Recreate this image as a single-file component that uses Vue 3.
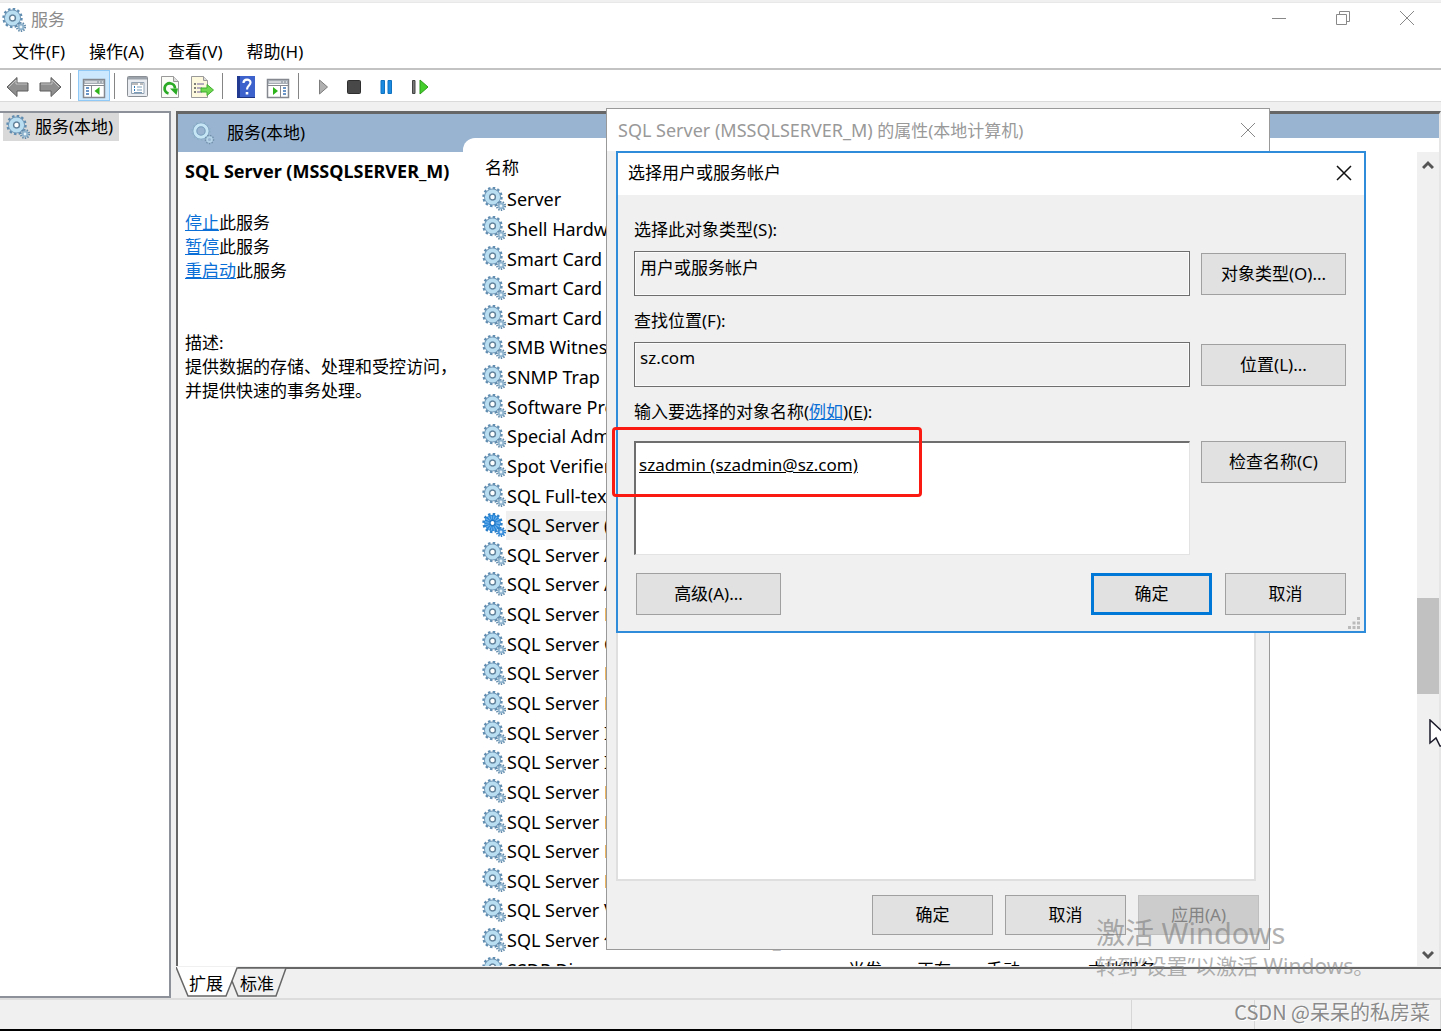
<script setup>
import { ref } from 'vue'

const menus = ['文件(F)', '操作(A)', '查看(V)', '帮助(H)']

const services = [
  'Server',
  'Shell Hardware',
  'Smart Card',
  'Smart Card',
  'Smart Card',
  'SMB Witness',
  'SNMP Trap',
  'Software Prot',
  'Special Admin',
  'Spot Verifier',
  'SQL Full-text',
  'SQL Server (M',
  'SQL Server A',
  'SQL Server A',
  'SQL Server B',
  'SQL Server C',
  'SQL Server D',
  'SQL Server D',
  'SQL Server I',
  'SQL Server I',
  'SQL Server L',
  'SQL Server P',
  'SQL Server R',
  'SQL Server R',
  'SQL Server V',
  'SQL Server 代理 (MSSQLSERVER_M)',
]
const selected = 11

const objectType = ref('用户或服务帐户')
const location = ref('sz.com')
const names = ref('szadmin (szadmin@sz.com)')
</script>

<template>
  <div class="desktop">
    <svg class="defs" width="0" height="0" aria-hidden="true">
      <defs>
        <g id="gear-shape">
          <circle cx="10.500" cy="10" r="8.8" fill="none" stroke="#5f8cb0" stroke-width="2.8" stroke-dasharray="2.4 2.2" />
          <circle cx="10.500" cy="10" r="5.9" fill="none" stroke="#7299b8" stroke-width="5.2" />
          <circle cx="10.500" cy="10" r="5.6" fill="none" stroke="#b9ddf1" stroke-width="4" />
          <circle cx="10.500" cy="10" r="2.900" fill="#fff" stroke="#5f8099" stroke-width="1.4" />
          <circle cx="19" cy="19" r="4" fill="none" stroke="#5f88a8" stroke-width="2.2" stroke-dasharray="1.3 1.2" />
          <circle cx="19" cy="19" r="2.4" fill="#e8f3fa" stroke="#8fb3cd" stroke-width="2" />
        </g>
        <g id="gear-picked">
          <circle cx="10.500" cy="10" r="8.8" fill="none" stroke="#2b7fc8" stroke-width="2.8" stroke-dasharray="2.4 2.2" />
          <circle cx="10.500" cy="10" r="5.6" fill="none" stroke="#2585d8" stroke-width="5.4" />
          <circle cx="10.500" cy="10" r="5.6" fill="none" stroke="#6db0ea" stroke-width="4" stroke-dasharray="1 1.2" />
          <circle cx="10.500" cy="10" r="2.6" fill="#fff" stroke="#1c74c4" stroke-width="1.4" />
          <circle cx="19" cy="19" r="4" fill="none" stroke="#2b7fc8" stroke-width="2.2" stroke-dasharray="1.3 1.2" />
          <circle cx="19" cy="19" r="2.4" fill="#d5e9fa" stroke="#3c8fdb" stroke-width="2" />
        </g>
        <g id="gear-pale">
          <circle cx="10" cy="10" r="8.8" fill="none" stroke="#8fb0c8" stroke-width="2" stroke-dasharray="1.6 2.4" />
          <circle cx="10" cy="10" r="6" fill="none" stroke="#7399b8" stroke-width="4.6" />
          <circle cx="10" cy="10" r="6.2" fill="none" stroke="#c6e6f6" stroke-width="3" />
          <circle cx="18.5" cy="18.5" r="4" fill="none" stroke="#6f8fa8" stroke-width="1.6" stroke-dasharray="1.3 1.4" />
          <circle cx="18.5" cy="18.5" r="2.4" fill="none" stroke="#b5d3e6" stroke-width="1.6" />
        </g>
      </defs>
    </svg>

    <header class="titlebar">
      <svg class="gear" viewBox="0 0 24 24"><use href="#gear-shape" /></svg>
      <span class="app-title">服务</span>
      <div class="win-buttons">
        <button type="button" aria-label="最小化">
          <svg width="16" height="16" viewBox="0 0 16 16"><path d="M1 8.5h14" stroke="#888" fill="none" /></svg>
        </button>
        <button type="button" aria-label="还原">
          <svg width="16" height="16" viewBox="0 0 16 16"><path d="M1.5 4.500h10v10h-10zM4.500 4.500v-3h10v10h-3" stroke="#888" fill="none" /></svg>
        </button>
        <button type="button" aria-label="关闭">
          <svg width="16" height="16" viewBox="0 0 16 16"><path d="M1 1l14 14M15 1L1 15" stroke="#888" fill="none" /></svg>
        </button>
      </div>
    </header>

    <nav class="menubar">
      <button v-for="m in menus" :key="m" type="button">{{ m }}</button>
    </nav>

    <div class="toolbar">
      <button type="button" aria-label="后退">
        <svg width="24" height="24" viewBox="0 0 24 24"><path d="M1 12L11 2.500v5.500h11v8h-11v5.500z" fill="#8f8f8f" stroke="#5c5c5c" /><path d="M3 12l7-7v4h11" fill="none" stroke="#c4c4c4" /></svg>
      </button>
      <button type="button" aria-label="前进">
        <svg width="24" height="24" viewBox="0 0 24 24"><path d="M23 12L13 2.500v5.500h-11v8h11v5.500z" fill="#8f8f8f" stroke="#5c5c5c" /><path d="M3 9h11V5l7 7" fill="none" stroke="#c4c4c4" /></svg>
      </button>
      <i class="sep"></i>
      <button type="button" class="on" aria-label="显示控制台树">
        <svg width="24" height="24" viewBox="0 0 24 24"><path d="M1.500 4.500h21v18h-21z" fill="#fff" stroke="#85898f" stroke-width="1.500" /><path d="M2 5h20v4H2z" fill="#a6adb5" /><path d="M3 7h12M17 7h1M20 7h1" stroke="#fff" /><path d="M2 10.500h20M9.500 10v12" stroke="#85898f" /><path d="M4 13h3M4 16h3M4 19h3" stroke="#3d73b5" stroke-width="1.500" /><path d="M17.500 12v8l-5-4z" fill="#2fb31c" /></svg>
      </button>
      <i class="sep"></i>
      <button type="button" aria-label="属性">
        <svg width="24" height="24" viewBox="0 0 24 24"><rect x="1.500" y="1.500" width="20" height="20" rx="1" fill="#e9edf1" stroke="#8a8f95" /><path d="M2 2h19v2.500H2z" fill="#9ca3aa" /><path d="M5.500 7.500h12.500v11h-12.500z" fill="#fff" stroke="#93a4b5" /><path d="M6 9h6M14 9h3" stroke="#777" /><path d="M8 12h1M8 15h1" stroke="#2b78bb" stroke-width="2" /><path d="M11 12h5M11 15h5M8 17.500h8" stroke="#7a9cba" /></svg>
      </button>
      <button type="button" aria-label="刷新">
        <svg width="24" height="24" viewBox="0 0 24 24"><path d="M3.500 1.500h12l5 5v16h-17z" fill="#fbfbf8" stroke="#999" /><path d="M15.500 1.500v5h5" fill="#ddd" stroke="#999" /><path d="M10.500 18.500a5.200 5.200 0 1 1 6.500-5" fill="none" stroke="#2bab25" stroke-width="2.800" /><path d="M12 13.500h8l-1.500 6.500z" fill="#2bab25" /></svg>
      </button>
      <button type="button" aria-label="导出列表">
        <svg width="24" height="24" viewBox="0 0 24 24"><path d="M1.500 1.500h12l4 4v17h-16z" fill="#fdf9df" stroke="#999" /><path d="M13.500 1.500v4h4" fill="#ddd" stroke="#999" /><path d="M4 9h2M4 13h2M4 17h2" stroke="#555" stroke-width="1.500" /><path d="M7 9h7M7 13h5M7 17h5" stroke="#6b5f99" /><path d="M11 13h6V9.500l6.500 5.500L17 20.500V17h-6z" fill="#6fd850" stroke="#3fae2f" /></svg>
      </button>
      <i class="sep"></i>
      <button type="button" aria-label="帮助">
        <svg width="24" height="24" viewBox="0 0 24 24"><path d="M3 1h18v22H3z" fill="#3d62cc" /><path d="M3 1h3v22H3z" fill="#223a91" /><path d="M3 22.500h18" stroke="#1d3480" /><path d="M9.500 8c0-4.500 7-4.500 7-.5 0 3-3.500 3-3.500 7" fill="none" stroke="#fff" stroke-width="2.200" /><path d="M11.700 17h2.600v2.500h-2.600z" fill="#fff" /></svg>
      </button>
      <button type="button" aria-label="显示操作窗格">
        <svg width="24" height="24" viewBox="0 0 24 24"><path d="M1.500 4.500h21v18h-21z" fill="#fff" stroke="#85898f" stroke-width="1.500" /><path d="M2 5h20v4H2z" fill="#a6adb5" /><path d="M3 7h12M17 7h1M20 7h1" stroke="#fff" /><path d="M2 10.500h20M14.500 10v12" stroke="#85898f" /><path d="M17 13h3M17 16h3M17 19h3" stroke="#3d73b5" stroke-width="1.500" /><path d="M7 12v8l5-4z" fill="#2fb31c" /></svg>
      </button>
      <i class="sep"></i>
      <button type="button" aria-label="启动服务">
        <svg width="24" height="24" viewBox="0 0 24 24"><path d="M9.500 5v14l8-7z" fill="#b0b0b0" stroke="#7c7c7c" /></svg>
      </button>
      <button type="button" aria-label="停止服务">
        <svg width="24" height="24" viewBox="0 0 24 24"><rect x="5.500" y="5.500" width="13" height="13" rx="1" fill="#484848" stroke="#2e2e2e" /></svg>
      </button>
      <button type="button" aria-label="暂停服务">
        <svg width="24" height="24" viewBox="0 0 24 24"><path d="M7 5.500h3.500v13H7zM14 5.500h3.500v13H14z" fill="#1a8ae0" stroke="#1173c0" /></svg>
      </button>
      <button type="button" aria-label="重启动服务">
        <svg width="24" height="24" viewBox="0 0 24 24"><path d="M6.500 5.500h2.500v13H6.500z" fill="#777" stroke="#444" /><path d="M14 5v14l8-7z" fill="#45cf2c" stroke="#2b9c18" /></svg>
      </button>
    </div>

    <main class="workspace">
      <aside class="tree">
        <button type="button" class="tree-item">
          <svg class="gear" viewBox="0 0 24 24"><use href="#gear-shape" /></svg>
          <span>服务(本地)</span>
        </button>
      </aside>

      <section class="result">
        <div class="pane">
          <div class="pane-head">
            <svg class="gear" viewBox="0 0 24 24"><use href="#gear-pale" /></svg>
            <span>服务(本地)</span>
          </div>
          <div class="pane-body">
            <div class="details">
              <h2>SQL Server (MSSQLSERVER_M)</h2>
              <p><a href="#stop">停止</a>此服务</p>
              <p><a href="#pause">暂停</a>此服务</p>
              <p><a href="#restart">重启动</a>此服务</p>
              <p class="about">描述:</p>
              <p>提供数据的存储、处理和受控访问，<br />并提供快速的事务处理。</p>
            </div>
            <div class="list">
              <div class="list-head">名称</div>
              <ul>
                <li v-for="(s, i) in services" :key="i" :class="{ picked: i === selected }">
                  <svg class="gear" viewBox="0 0 24 24"><use :href="i === selected ? '#gear-picked' : '#gear-shape'" /></svg>
                  <span class="name">{{ s }}</span>
                </li>
                <li>
                  <svg class="gear" viewBox="0 0 24 24"><use href="#gear-shape" /></svg>
                  <span class="name cell-name">SSDP Di</span>
                  <span class="cell">当发</span>
                  <span class="cell">正在</span>
                  <span class="cell-start">手动</span>
                  <span>本地服务</span>
                </li>
              </ul>
            </div>
            <div class="scroll">
              <svg width="12" height="10" viewBox="0 0 12 10"><path d="M1 8l5-5 5 5" fill="none" stroke="#555" stroke-width="3" /></svg>
              <div class="thumb"></div>
              <svg width="12" height="10" viewBox="0 0 12 10"><path d="M1 2l5 5 5-5" fill="none" stroke="#555" stroke-width="3" /></svg>
            </div>
          </div>
        </div>
        <div class="tabs">
          <svg class="tab-lines" width="112" height="30" viewBox="0 0 112 30">
            <path d="M0 0l12 29h38l12-29z" fill="#fff" />
            <path d="M0 0l12 29h38l6-15" fill="none" stroke="#666" stroke-width="1.500" />
            <path d="M56 14l6 15h38L110 1H61z" fill="#f0f0f0" stroke="#666" stroke-width="1.500" />
          </svg>
          <button type="button">扩展</button>
          <button type="button">标准</button>
        </div>
      </section>
    </main>

    <footer class="status"><span></span><span></span><span></span></footer>

    <section class="dialog props">
      <div class="dlg-title">
        <span><span class="latin">SQL Server (MSSQLSERVER_M)</span> 的属性(本地计算机)</span>
        <button type="button" aria-label="关闭">
          <svg width="16" height="16" viewBox="0 0 16 16"><path d="M1 1l14 14M15 1L1 15" stroke="#888" fill="none" /></svg>
        </button>
      </div>
      <div class="props-page"></div>
      <div class="props-buttons">
        <button type="button" class="btn">确定</button>
        <button type="button" class="btn">取消</button>
        <button type="button" class="btn" disabled>应用(A)</button>
      </div>
    </section>

    <section class="dialog picker">
      <div class="dlg-title">
        <span>选择用户或服务帐户</span>
        <button type="button" aria-label="关闭">
          <svg width="16" height="16" viewBox="0 0 16 16"><path d="M1 1l14 14M15 1L1 15" stroke="#111" stroke-width="1.500" fill="none" /></svg>
        </button>
      </div>
      <div class="form">
        <label for="obj-type">选择此对象类型(S):</label>
        <div class="line">
          <input id="obj-type" v-model="objectType" readonly />
          <button type="button" class="btn">对象类型(O)...</button>
        </div>
        <label for="loc">查找位置(F):</label>
        <div class="line">
          <input id="loc" v-model="location" readonly />
          <button type="button" class="btn">位置(L)...</button>
        </div>
        <label for="names">输入要选择的对象名称(<a href="#examples">例如</a>)(<u>E</u>):</label>
        <div class="line names-line">
          <textarea id="names" v-model="names" spellcheck="false"></textarea>
          <button type="button" class="btn">检查名称(C)</button>
        </div>
        <div class="actions">
          <button type="button" class="btn advanced">高级(A)...</button>
          <button type="button" class="btn primary">确定</button>
          <button type="button" class="btn">取消</button>
        </div>
      </div>
      <svg class="grip" width="12" height="12" viewBox="0 0 12 12"><path d="M9 0h3v3H9zM9 4.500h3v3H9zM9 9h3v3H9zM4.500 4.500h3v3h-3zM4.500 9h3v3h-3zM0 9h3v3H0z" fill="#bbb" /></svg>
    </section>

    <div class="highlight"></div>

    <div class="activate">
      <div class="activate-title">激活 Windows</div>
      <div class="activate-text">转到“设置”以激活 Windows。</div>
    </div>
    <div class="credit">CSDN @呆呆的私房菜</div>

    <svg class="cursor" width="12" height="30" viewBox="0 0 12 30"><path d="M1 1v23l6-5 4 8h6V16z" fill="#fff" stroke="#1a1a2a" stroke-width="1.500" /></svg>
  </div>
</template>

<style>
body {
  margin: 0;
  background: #fff;
}
</style>

<style scoped>
.desktop {
  position: relative;
  display: flex;
  flex-direction: column;
  box-sizing: border-box;
  min-height: 100vh;
  margin-right: 4px;
  border-bottom: 2px solid #000;
  overflow: hidden;
  background: #f0f0f0;
  color: #000;
  font-family: "Noto Sans", "Noto Sans CJK SC", sans-serif;
  font-size: 17px;
  line-height: 24px;
}
.defs {
  position: absolute;
}
button {
  padding: 0;
  border: 0;
  background: none;
  color: inherit;
  font: inherit;
}
a {
  color: #0a6fd6;
}
svg {
  display: block;
  flex: none;
}
.gear {
  width: 24px;
  height: 24px;
}
.latin {
  font-size: 18px;
}

.titlebar {
  display: flex;
  align-items: center;
  gap: 5px;
  height: 34px;
  border-top: 1px solid #e8e8e8;
  margin-top: 2px;
  padding-left: 2px;
  background: #fff;
  color: #8c8c8c;
}
.win-buttons {
  display: flex;
  gap: 48px;
  margin-left: auto;
  padding: 0 26px 4px 0;
}
.menubar {
  display: flex;
  gap: 24px;
  box-sizing: border-box;
  height: 33px;
  padding: 0 0 2px 12px;
  border-bottom: 2px solid #c3c3c3;
  background: #fff;
}
.toolbar {
  display: flex;
  height: 31px;
  padding-left: 2px;
  border-bottom: 1px solid #dadada;
  background: #fff;
}
.toolbar button {
  display: flex;
  align-items: center;
  justify-content: center;
  box-sizing: border-box;
  width: 32px;
  height: 31px;
  padding-top: 2px;
}
.toolbar .on {
  border: 1px solid #90c8f6;
  background: #cce8ff;
}
.sep {
  box-sizing: border-box;
  width: 12px;
  height: 26px;
  margin-top: 3px;
  border: solid transparent;
  border-width: 0 7px 0 4px;
  background: #858585;
  background-clip: padding-box;
}

.workspace {
  display: flex;
  flex: 1;
  gap: 5px;
  margin-top: 9px;
}
.tree {
  box-sizing: border-box;
  width: 171px;
  padding: 0 0 0 3px;
  border: 2px solid #8d929a;
  border-left: 0;
  background: #fff;
}
.tree-item {
  display: flex;
  align-items: center;
  gap: 5px;
  height: 28px;
  padding: 0 6px 0 3px;
  background: #d9d9d9;
}
.result {
  display: flex;
  flex: 1;
  flex-direction: column;
  min-width: 0;
}
.pane {
  display: flex;
  flex: 1;
  flex-direction: column;
  border: solid #666;
  border-width: 3px 2px 0 2px;
  border-right-color: #e6e6e6;
  background: #fff;
}
.pane-head {
  display: flex;
  align-items: center;
  gap: 12px;
  height: 38px;
  padding-left: 13px;
  background: #99b4d1;
}
.pane-body {
  display: flex;
  flex: 1;
}
.details {
  box-sizing: border-box;
  width: 285px;
  padding: 7px 0 0 7px;
}
h2 {
  margin: 0 0 28px;
  font-size: 18px;
  line-height: 24px;
  white-space: nowrap;
}
p {
  margin: 0;
  white-space: nowrap;
}
.details .about {
  margin-top: 48px;
}
.list {
  flex: 1;
  min-width: 0;
  height: 828px;
  margin-top: -14px;
  padding-left: 19px;
  border-top-left-radius: 12px;
  overflow: hidden;
  background: #fff;
}
.list-head {
  padding: 18px 0 5px 3px;
}
ul {
  display: grid;
  grid-auto-rows: 1fr;
  height: 800px;
  margin: 0;
  padding: 0;
  list-style: none;
}
li {
  display: flex;
  align-items: center;
  white-space: nowrap;
}
li .gear {
  margin-bottom: 2px;
}
.name {
  padding: 2px 2px 2px 1px;
  font-size: 18px;
  line-height: 25px;
}
.picked .name {
  background: #f0f0f0;
}
.cell-name {
  width: 339px;
}
.cell {
  width: 69px;
}
.cell-start {
  width: 102px;
}
.scroll {
  display: flex;
  flex-direction: column;
  align-items: center;
  width: 22px;
  margin-top: -14px;
  padding: 8px 0 6px;
  border-top: 14px solid #fff;
  background: #f0f0f0;
}
.thumb {
  width: 22px;
  height: 96px;
  margin: 428px 0 auto;
  background: #c1c1c1;
}
.tabs {
  position: relative;
  display: flex;
  gap: 17px;
  height: 29px;
  margin-top: 1px;
  padding-left: 13px;
  border-top: 2px solid #666;
}
.tab-lines {
  position: absolute;
  top: -2px;
  left: 0;
}
.tabs button {
  position: relative;
}
.status {
  display: flex;
  justify-content: flex-end;
  height: 29px;
  border-top: 2px solid #dcdcdc;
}
.status span {
  box-sizing: border-box;
  width: 184px;
  border-right: 1px solid #d6d6d6;
}
.status span:nth-child(2) {
  width: 123px;
}
.status span:last-child {
  width: 186px;
}

.dialog {
  position: absolute;
  display: flex;
  flex-direction: column;
  box-sizing: border-box;
  background: #f0f0f0;
}
.dlg-title {
  display: flex;
  align-items: center;
  justify-content: space-between;
  box-sizing: border-box;
  height: 42px;
  padding: 0 12px 2px 10px;
  background: #fff;
}
.btn {
  box-sizing: border-box;
  width: 145px;
  height: 42px;
  border: 1px solid #a0a0a0;
  background: #e1e1e1;
}
.props {
  top: 108px;
  left: 606px;
  width: 664px;
  height: 842px;
  border: 1px solid #999;
  padding-bottom: 14px;
}
.props .dlg-title {
  padding: 0 13px 0 11px;
  color: #999;
}
.props-page {
  flex: 1;
  margin: 0 13px 14px 9px;
  border: 2px solid #dfdfdf;
  background: #fff;
}
.props-buttons {
  display: flex;
  justify-content: flex-end;
  gap: 12px;
  padding-right: 10px;
}
.props-buttons .btn {
  width: 121px;
  height: 40px;
}
.btn:disabled {
  border-color: #bfbfbf;
  background: #ccc;
  color: #838383;
}
.picker {
  top: 151px;
  left: 616px;
  width: 750px;
  border: 2px solid #2f8cdb;
}
.form {
  display: flex;
  flex-direction: column;
  padding: 23px 18px 16px 16px;
}
.line {
  display: flex;
  align-items: center;
  gap: 11px;
  margin: 9px 0 13px;
}
.line input {
  box-sizing: border-box;
  flex: 1;
  min-width: 0;
  height: 45px;
  padding: 0 5px 14px;
  border: 1px solid #6e6e6e;
  outline: 1px solid #fbfbfb;
  outline-offset: -2px;
  background: #f0f0f0;
  color: #000;
  font: inherit;
}
.names-line {
  align-items: flex-start;
  margin: 17px 0 18px;
}
textarea {
  box-sizing: border-box;
  flex: 1;
  min-width: 0;
  height: 114px;
  padding: 10px 3px;
  border: solid #6e6e6e;
  border-width: 2px 1px 1px 2px;
  border-right-color: #e3e3e3;
  border-bottom-color: #e3e3e3;
  outline: 0;
  resize: none;
  background: #fff;
  color: #000;
  font: inherit;
  text-decoration: underline;
}
.actions {
  display: flex;
  gap: 13px;
  padding-left: 2px;
}
.actions .btn {
  width: 121px;
}
.actions .advanced {
  width: 145px;
  margin-right: auto;
}
.actions .primary {
  border: 3px solid #0078d7;
}
.grip {
  position: absolute;
  right: 4px;
  bottom: 2px;
}

.highlight {
  position: absolute;
  top: 427px;
  left: 612px;
  box-sizing: border-box;
  width: 310px;
  height: 70px;
  border: 3px solid #fb1a12;
  border-radius: 4px;
}
.activate {
  position: absolute;
  top: 912px;
  left: 1096px;
  color: rgba(125, 125, 125, 0.6);
  white-space: nowrap;
}
.activate-title {
  font-size: 29px;
  line-height: 41px;
}
.activate-text {
  font-size: 21px;
  line-height: 26px;
}
.credit {
  position: absolute;
  right: 11px;
  bottom: 5px;
  color: #8a8a8a;
  font-family: "Noto Sans CJK SC", sans-serif;
  font-size: 20px;
  line-height: 24px;
  text-shadow: 1px 1px 0 #fff;
}
.cursor {
  position: absolute;
  top: 719px;
  right: 0;
}
</style>
